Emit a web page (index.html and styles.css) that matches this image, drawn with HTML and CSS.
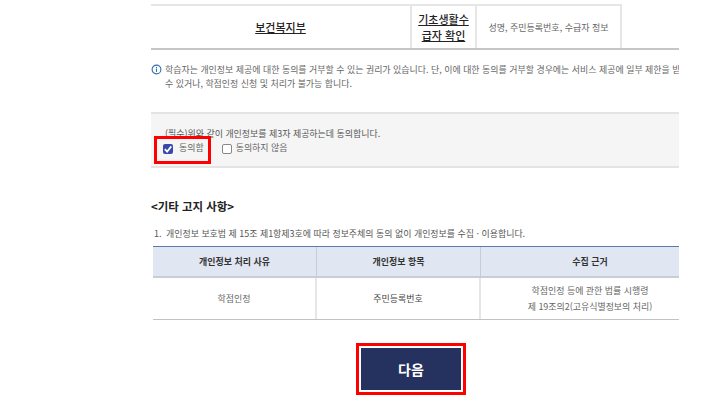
FILE: index.html
```html
<!DOCTYPE html>
<html lang="ko">
<head>
<meta charset="utf-8">
<title>개인정보 제공 동의</title>
<link rel="stylesheet" href="styles.css">
</head>
<body>
<main class="page">
  <div class="top-table">
    <div class="cell org"><u>보건복지부</u></div>
    <div class="cell purpose"><u>기초생활수<br>급자 확인</u></div>
    <div class="cell items">성명, 주민등록번호, 수급자 정보</div>
    <div class="blank"></div>
  </div>

  <div class="notice">
    <svg class="info" viewBox="0 0 12 12" width="11" height="11"><circle cx="6" cy="6" r="4.8" fill="none" stroke="#2f6fb0" stroke-width="1.2"/><rect x="5.4" y="5" width="1.2" height="3.6" fill="#2f6fb0"/><rect x="5.4" y="3.2" width="1.2" height="1.2" fill="#2f6fb0"/></svg>
    <p>학습자는 개인정보 제공에 대한 동의를 거부할 수 있는 권리가 있습니다. 단, 이에 대한 동의를 거부할 경우에는 서비스 제공에 일부 제한을 받을<br>수 있거나, 학점인정 신청 및 처리가 불가능 합니다.</p>
  </div>

  <section class="agree">
    <p class="agree-title">(필수)위와 같이 개인정보를 제3자 제공하는데 동의합니다.</p>
    <div class="options">
      <span class="option">
        <span class="box checked"><svg viewBox="0 0 10 10" width="10" height="10"><path d="M1.8 5.2 4.1 7.6 8.3 2.4" fill="none" stroke="#fff" stroke-width="1.7"/></svg></span>동의함
        <span class="mark"></span>
      </span>
      <span class="option off"><span class="box"></span>동의하지 않음</span>
    </div>
  </section>

  <h2 class="heading">&lt;기타 고지 사항&gt;</h2>
  <p class="item"><span class="num">1.</span>개인정보 보호법 제 15조 제1항제3호에 따라 정보주체의 동의 없이 개인정보를 수집 · 이용합니다.</p>

  <div class="grid-table">
    <div class="th">개인정보 처리 사유</div>
    <div class="th">개인정보 항목</div>
    <div class="th">수집 근거</div>
    <div class="td">학점인정</div>
    <div class="td dark">주민등록번호</div>
    <div class="td">학점인정 등에 관한 법률 시행령<br>제 19조의2(고유식별정보의 처리)</div>
  </div>

  <div class="actions">
    <button class="next" type="button">다음</button>
  </div>
</main>
</body>
</html>
```
FILE: styles.css
```css
* { box-sizing: border-box; }
html, body { margin: 0; height: 412px; overflow: hidden; background: #fff; }
body { font-family: "Noto Sans CJK KR", "Noto Sans", sans-serif; color: #555; }
p, h2 { margin: 0; }

.page { width: 528px; margin-left: 151px; height: 412px; overflow: hidden; padding-top: 4px; }

.top-table { display: grid; grid-template-columns: 261px 65px 145px 57px; height: 46px; border-bottom: 2px solid #c6c6c6; }
.cell { display: flex; align-items: center; justify-content: center; text-align: center; border-top: 2px solid #e6e6e6; }
.org, .purpose { color: #222; font-size: 11px; font-weight: 500; line-height: 16px; }
.org, .purpose { border-right: 2px solid #e6e6e6; }
.items { font-size: 9px; color: #666; border-right: 2px solid #e6e6e6; }

.notice { display: flex; gap: 3px; padding-top: 13px; height: 62px; }
.info { flex: none; margin-top: 1px; }
.notice p { font-size: 8.95px; line-height: 14px; color: #666; white-space: nowrap; }

.agree { height: 56px; background: #f5f5f5; border-top: 2px solid #e4e4e4; border-bottom: 2px solid #e4e4e4; padding: 13px 12px 0 14px; }
.agree-title { font-size: 8.95px; line-height: 14px; color: #555; }
.options { display: flex; gap: 18px; margin: 0 0 0 -2px; }
.option { position: relative; display: flex; align-items: center; gap: 6px; font-size: 8.95px; line-height: 14px; color: #666; }
.option.off { gap: 4px; }
.box { width: 10px; height: 10px; margin-top: 2px; border: 1px solid #888; border-radius: 2px; background: #fff; display: block; }
.box.checked { background: #3949ab; border: 0; }
.box svg { display: block; }
.mark { position: absolute; left: -9px; top: -5px; width: 57px; height: 28px; border: 3px solid #f00; }

.heading { font-size: 11.45px; line-height: 18px; font-weight: 700; color: #222; margin-top: 29px; }
.item { display: flex; font-size: 8.95px; line-height: 14px; color: #555; margin-top: 12px; padding-left: 3px; white-space: nowrap; }
.num { width: 12px; }

.grid-table { display: grid; grid-template-columns: 164px 164px 218px; width: 546px; margin: 5px 0 0 2px; border-top: 1px solid #5a7ba6; border-bottom: 1px solid #c2c2c2; }
.th { height: 31px; background: #e0e7f2; border-bottom: 2px solid #c8ced8; border-right: 1px solid #c4ccd8; display: flex; align-items: center; justify-content: center; font-size: 8.95px; font-weight: 700; color: #333; }
.th:nth-child(3) { border-right: 0; }
.td { height: 41px; border-right: 2px solid #e6e6e6; display: flex; align-items: center; justify-content: center; text-align: center; font-size: 8.95px; line-height: 16px; color: #666; }
.td:last-child { border-right: 0; }
.td.dark { color: #444; }

.actions { display: flex; justify-content: center; margin-top: 23px; padding-right: 8px; }
.next { width: 110px; height: 52px; background: #25315f; border: 0; outline: 0; box-shadow: inset 0 0 0 3px #f00, inset 0 0 0 5px #fff; color: #fff; font-family: inherit; font-size: 14px; font-weight: 700; }
```
